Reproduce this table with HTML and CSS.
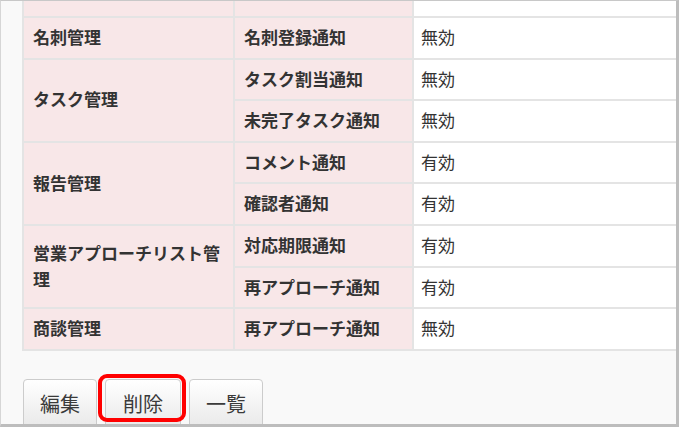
FILE: index.html
```html
<!DOCTYPE html>
<html lang="ja">
<head>
<meta charset="utf-8">
<link rel="stylesheet" href="styles.css">
</head>
<body>
<div class="frame">
  <table class="settings">
    <colgroup>
      <col class="c1"><col class="c2"><col class="c3">
    </colgroup>
    <tr class="partial"><th></th><th></th><td></td></tr>
    <tr><th>名刺管理</th><th>名刺登録通知</th><td>無効</td></tr>
    <tr><th rowspan="2">タスク管理</th><th>タスク割当通知</th><td>無効</td></tr>
    <tr><th>未完了タスク通知</th><td>無効</td></tr>
    <tr><th rowspan="2">報告管理</th><th>コメント通知</th><td>有効</td></tr>
    <tr><th>確認者通知</th><td>有効</td></tr>
    <tr><th rowspan="2">営業アプローチリスト管理</th><th>対応期限通知</th><td>有効</td></tr>
    <tr><th>再アプローチ通知</th><td>有効</td></tr>
    <tr><th>商談管理</th><th>再アプローチ通知</th><td>無効</td></tr>
  </table>
  <div class="actions">
    <button class="btn">編集</button>
    <span class="highlight"><button class="btn">削除</button></span>
    <button class="btn">一覧</button>
  </div>
</div>
</body>
</html>
```

FILE: styles.css
```css
html, body {
  margin: 0;
  padding: 0;
  background: #ffffff;
}

.frame {
  width: 679px;
  height: 427px;
  box-sizing: border-box;
  overflow: hidden;
  background: #f9f9f9;
  border-top: 1px solid #c8c8c8;
  border-left: 1px solid #d6d6d6;
  border-right: 3px solid #bdbdbd;
  border-bottom: 3px solid #bdbdbd;
  padding-left: 21px;
  font-family: "Noto Sans CJK JP", "Noto Sans", sans-serif;
  color: #333333;
}

.settings {
  width: 654px;
  border-collapse: collapse;
  table-layout: fixed;
  font-size: 17px;
  line-height: 25.6px;
}

.c1 { width: 211px; }
.c2 { width: 179px; }
.c3 { width: 264px; }

.settings th,
.settings td {
  border: 2px solid #e4e4e4;
  padding: 6px 8px 8px 9px;
  text-align: left;
  vertical-align: middle;
}

.settings th {
  background: #f8e7e8;
  font-weight: bold;
}

.settings td {
  background: #ffffff;
  font-weight: normal;
  padding-left: 7px;
}

.settings tr.partial th,
.settings tr.partial td {
  border-top: none;
  height: 15px;
  padding: 0;
}

.actions {
  display: flex;
  gap: 8px;
  margin-top: 28px;
  padding-left: 1px;
}

.btn {
  font-family: "Noto Sans CJK JP", "Noto Sans", sans-serif;
  font-size: 20px;
  color: #3a3a3a;
  height: 49px;
  padding: 0 16px;
  border: 1px solid #cccccc;
  border-radius: 4px;
  background: linear-gradient(#ffffff, #e9e9e9);
}

.highlight {
  position: relative;
  display: inline-flex;
}

.highlight .btn {
  padding: 0 17px;
}

.highlight::after {
  content: "";
  position: absolute;
  left: -7px;
  top: -5px;
  right: -5px;
  height: 48px;
  box-sizing: border-box;
  border: 4px solid #ff0000;
  border-radius: 9px;
  pointer-events: none;
}
```
